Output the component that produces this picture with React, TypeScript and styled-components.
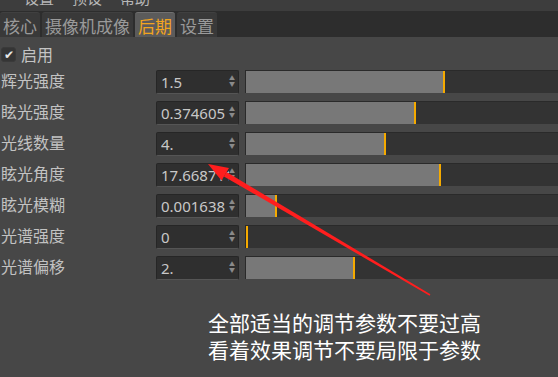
import React from 'react';
import styled, { createGlobalStyle } from 'styled-components';

const GlobalStyle = createGlobalStyle`
  body {
    margin: 0;
    background: #474747;
    overflow: hidden;
  }
`;

const Page = styled.div`
  position: relative;
  width: 558px;
  height: 377px;
  overflow: hidden;
  background: #474747;
  font-family: 'Noto Sans', 'Noto Sans CJK SC', sans-serif;
`;

const MenuBar = styled.div`
  height: 11px;
  overflow: hidden;
  background: #3d3d3d;
  display: flex;
  gap: 18px;
  padding-left: 24px;
`;

const MenuItem = styled.span`
  margin-top: -12px;
  font-size: 15px;
  line-height: 20px;
  color: #b8b8b8;
`;

const TabBar = styled.div`
  height: 26px;
  background: #2d2d2d;
  display: flex;
  align-items: flex-end;
  gap: 2px;
`;

const Tab = styled.div<{ active?: boolean }>`
  height: 25px;
  padding: 0 3px;
  display: flex;
  align-items: center;
  font-size: 17px;
  color: ${p => (p.active ? '#f2a41e' : '#9a9a9a')};
  background: ${p => (p.active ? '#5b5b5b' : '#393939')};
  border-radius: 3px 3px 0 0;
  border-top: 1px solid ${p => (p.active ? '#707070' : '#404040')};
  box-sizing: border-box;
`;

const EnableRow = styled.div`
  height: 29px;
  padding-top: 5px;
  box-sizing: border-box;
  display: flex;
  align-items: center;
  gap: 5px;
  padding-left: 1px;
  color: #c4c4c4;
  font-size: 16px;
`;

const CheckBox = styled.span`
  width: 13px;
  height: 13px;
  border-radius: 3px;
  background: #353535;
  border: 1px solid #3a3a3a;
  color: #e8e8e8;
  font-size: 12px;
  line-height: 13px;
  text-align: center;
`;

const Row = styled.div`
  height: 31px;
  display: flex;
  align-items: center;
`;

const Label = styled.div`
  width: 155px;
  flex: none;
  padding-left: 1px;
  color: #c2c2c2;
  font-size: 16px;
  margin-top: -3px;
`;

const NumberField = styled.div`
  width: 83px;
  height: 24px;
  flex: none;
  box-sizing: border-box;
  background: #2f2f2f;
  border: 1px solid #262626;
  border-bottom-color: #555;
  border-radius: 2px;
  display: flex;
  align-items: center;
  padding: 0 3px 0 4px;
  color: #c8c8c8;
  font-size: 15px;
`;

const Value = styled.span`
  flex: 1;
  overflow: hidden;
  white-space: nowrap;
`;

const Spin = styled.span`
  display: flex;
  flex-direction: column;
  gap: 1px;
  color: #8a8a8a;
  font-size: 6px;
  line-height: 5px;
`;

const Slider = styled.div`
  margin-left: 6px;
  flex: 1;
  height: 23px;
  box-sizing: border-box;
  background: #333;
  border-top: 1px solid #2a2a2a;
  border-left: 1px solid #2a2a2a;
  display: flex;
`;

const Fill = styled.div`
  height: 100%;
  background: #787878;
  flex: none;
`;

const Marker = styled.div`
  width: 2px;
  height: 100%;
  background: #f5aa00;
  flex: none;
`;

const Note = styled.div`
  margin-top: 26px;
  padding-left: 208px;
  color: #fff;
  font-family: 'Noto Sans CJK SC', sans-serif;
  font-size: 21px;
  line-height: 27px;
`;

const Arrow = styled.svg`
  position: absolute;
  left: 0;
  top: 0;
  pointer-events: none;
`;

const rows = [
  { label: '辉光强度', value: '1.5', fill: 197 },
  { label: '眩光强度', value: '0.374605', fill: 168 },
  { label: '光线数量', value: '4.', fill: 138 },
  { label: '眩光角度', value: '17.668711', fill: 193 },
  { label: '眩光模糊', value: '0.001638', fill: 29 },
  { label: '光谱强度', value: '0', fill: 0 },
  { label: '光谱偏移', value: '2.', fill: 107 },
];

const tabs = ['核心', '摄像机成像', '后期', '设置'];

const App = () => {
  return (
    <Page>
      <GlobalStyle />
      <MenuBar>
        <MenuItem>设置</MenuItem>
        <MenuItem>预设</MenuItem>
        <MenuItem>帮助</MenuItem>
      </MenuBar>
      <TabBar>
        {tabs.map(t => (
          <Tab key={t} active={t === '后期'}>
            {t}
          </Tab>
        ))}
      </TabBar>
      <EnableRow>
        <CheckBox>✔</CheckBox>
        启用
      </EnableRow>
      {rows.map(({ label, value, fill }) => (
        <Row key={label}>
          <Label>{label}</Label>
          <NumberField>
            <Value>{value}</Value>
            <Spin>
              <span>▲</span>
              <span>▼</span>
            </Spin>
          </NumberField>
          <Slider>
            <Fill style={{ width: fill }} />
            <Marker />
          </Slider>
        </Row>
      ))}
      <Note>
        全部适当的调节参数不要过高
        <br />
        看着效果调节不要局限于参数
      </Note>
      <Arrow width="558" height="377" viewBox="0 0 558 377">
        <polygon points="429.6,295.7 430.4,294.3 226.5,172 223.9,176.4" fill="#ff1e1e" />
        <polygon points="208,164 229,168 221.5,180.5" fill="#ff1e1e" />
      </Arrow>
    </Page>
  );
};

export default App;
